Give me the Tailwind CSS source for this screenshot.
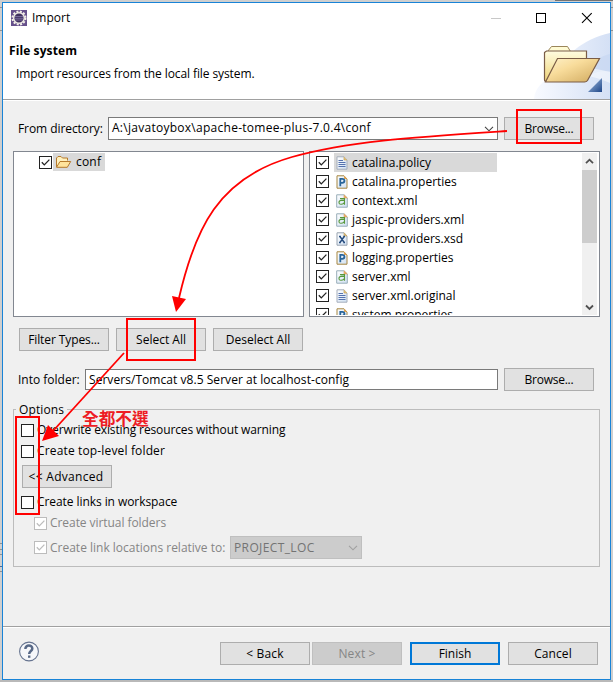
<!DOCTYPE html>
<html lang="en">
<head>
<meta charset="utf-8">
<title>Import</title>
<script src="https://cdn.jsdelivr.net/npm/@tailwindcss/browser@4"></script>
</head>
<body class="w-[613px] h-[682px] overflow-hidden bg-[#cfcfcf] font-['Open_Sans','Noto_Sans_CJK_TC',sans-serif] text-[12px] leading-[18px] text-black">
<svg class="absolute size-0">
  <symbol id="check" viewBox="0 0 13 13"><rect x=".5" y=".5" width="12" height="12" fill="#fff" stroke="currentColor"/><path d="M2.8 6.3L5.3 8.9L10.4 3.6" fill="none" stroke="currentColor" stroke-width="1.3"/></symbol>
  <symbol id="box" viewBox="0 0 13 13"><rect x=".5" y=".5" width="12" height="12" fill="#fff" stroke="#222"/></symbol>
  <linearGradient id="pg" x1="0" y1="0" x2="1" y2="1"><stop offset="0" stop-color="#fff"/><stop offset="1" stop-color="#cfe0f3"/></linearGradient>
  <symbol id="text" viewBox="0 0 12 14"><path d="M1 .8H8L11 4V13.2H1Z" fill="url(#pg)" stroke="#a5aebb"/><path d="M8 .8V4H11" fill="#e8c67a" stroke="#c5a560" stroke-width=".7"/><path d="M2.5 4.5H7M2.5 6.5H9.5M2.5 8.5H9.5M2.5 10.5H9.5" stroke="#5572ae"/></symbol>
  <symbol id="prop" viewBox="0 0 12 14"><path d="M1 .8H8L11 4V13.2H1Z" fill="url(#pg)" stroke="#a5853f"/><path d="M8 .8V4H11Z" fill="#e5a653"/><path d="M4.3 11.2V3.8H6.2C9.2 3.8 9.2 7.9 6.2 7.9H4.3" fill="none" stroke="#28659a" stroke-width="1.8"/></symbol>
  <symbol id="xml" viewBox="0 0 12 14"><path d="M.7 .8H8L11.3 4V13.2H.7Z" fill="url(#pg)" stroke="#98adb8"/><path d="M8 .8V4H11.3Z" fill="#f0ae65" stroke="#dba160" stroke-width=".6"/><path d="M4 4.6H8.5V10.8M8.5 6.4H5.5Q3 6.4 3 8.4T5.2 10.2Q8 10.2 8.5 8.2" fill="none" stroke="#57983b" stroke-width="1.1"/></symbol>
  <symbol id="xsd" viewBox="0 0 12 14"><path d="M1 .8H8L11 4V13.2H1Z" fill="url(#pg)" stroke="#98a3b0"/><path d="M8 .8V4H11Z" fill="#e4c17b" stroke="#c5a560" stroke-width=".6"/><path d="M4 4.5L8.2 10.5M8.2 4.5L4 10.5M3 4.5H5M7.3 4.5H9M3 10.5H5M7.3 10.5H9" stroke="#234a7d" stroke-width="1.4"/></symbol>
</svg>

<div class="relative w-[613px] h-[682px] overflow-hidden">
  <svg class="absolute inset-0" width="613" height="682"><path d="M0 7.5H2M0 30.5H2M611 7.5H613M611 30.5H613M0 543.5H2M0 549.5H2M0 554.5H2M0 571.5H2" stroke="#919191"/><path d="M555 .5H613" stroke="#747474"/><path d="M0 566.5H2" stroke="#4b6c98"/><path d="M0 681H613" stroke="#b9b9b9" stroke-width="2"/></svg>

  <main class="relative ml-[2px] mt-[2px] flex h-[678px] w-[609px] flex-col border border-[#1883d7] bg-[#f0f0f0]">
    <header class="relative h-[96px] shrink-0 bg-white">
      <div class="flex h-[29px] items-center pl-[8px]">
        <svg width="16" height="16" viewBox="0 0 16 16"><rect width="16" height="16" fill="#66508b"/><circle cx="8" cy="8" r="6.4" fill="none" stroke="#f4f1e9" stroke-width="2.2" stroke-dasharray="2 1.35"/><circle cx="8" cy="8" r="5.3" fill="#40315f" stroke="#ece8e2" stroke-width="1.5"/><path d="M4 6.5H12M3.5 8.3H12.5M4.3 10H11.7" stroke="#8577aa" stroke-width=".8"/></svg>
        <span class="ml-[5px]">Import</span>
        <svg class="ml-auto mr-[17px]" width="103" height="12" viewBox="0 0 103 12"><path d="M1 6.5H11" stroke="#c8c8c8"/><rect x="46.5" y="1.5" width="9" height="9" fill="none" stroke="#000"/><path d="M92 1.2L101.7 10.9M101.7 1.2L92 10.9" stroke="#000" stroke-width="1.1"/></svg>
      </div>
      <h1 class="ml-[6px] mt-[10px] text-[12px] leading-[18px] font-bold tracking-[0.1px]">File system</h1>
      <p class="ml-[13px] mt-[5px] tracking-[-0.1px]">Import resources from the local file system.</p>
      <svg class="absolute top-[29px] right-0" width="76" height="67" viewBox="0 0 76 67">
        <defs><linearGradient id="bg1" x1="0" y1="0" x2="1" y2="0"><stop offset="0" stop-color="#f8faff"/><stop offset="1" stop-color="#d4e0f5"/></linearGradient><linearGradient id="f1" x1="0" y1="0" x2="0" y2="1"><stop offset="0" stop-color="#fffce0"/><stop offset="1" stop-color="#efd377"/></linearGradient><linearGradient id="f2" x1="0" y1="0" x2="1" y2="1"><stop offset="0" stop-color="#fff2cb"/><stop offset=".4" stop-color="#f8dc9b"/><stop offset="1" stop-color="#d0a95e"/></linearGradient><linearGradient id="tri" x1="0" y1="0" x2="1" y2="1"><stop offset="0" stop-color="#a8c3e5"/><stop offset="1" stop-color="#1e4688"/></linearGradient></defs>
        <path d="M76 1C49 7 28 25 20 44C8 49 1 56 0 67H76Z" fill="url(#bg1)"/><path d="M76 22C62 25 51 34 47 49C60 39 67 39 76 39Z" fill="#c5d6f2" opacity=".6"/><path d="M20 44C44 32 63 37 76 40V51C55 41 38 43 20 44Z" fill="#fff" opacity=".5"/>
        <g transform="translate(.5 -.5)"><path d="M13 20L17 15H33L36 20Z" fill="#fffbd4" stroke="#9b865a"/><path d="M10 21L12 19.5H52V48Q51 50 49 50H12Q10 50 10 48Z" fill="url(#f1)" stroke="#7a5c46" stroke-width="1.2"/><path d="M23 27H65L53 49Q52 50.5 50 50.5H11Z" fill="url(#f2)" stroke="#7a5c46" stroke-width="1.2"/></g><path d="M54 60L68 46V60Z" fill="url(#tri)"/>
      </svg>
    </header>
    <div class="h-[2px] shrink-0 border-t border-[#a0a0a0] bg-white"></div>

    <section class="flex flex-col pl-[10px] pr-[10px]">
      <div class="mt-[16px] flex h-[23px] items-center pr-[6px] pl-[5px]">
        <label class="w-[90px] tracking-[-0.07px]">From directory:</label>
        <div class="flex h-[23px] w-[390px] items-center border border-[#7a7a7a] bg-white pl-[3px]"><span class="-mt-px tracking-[0.27px]">A:\javatoybox\apache-tomee-plus-7.0.4\conf</span><svg class="ml-auto mr-[3px]" width="10" height="6" viewBox="0 0 10 6"><path d="M1 .8L5 4.8L9 .8" fill="none" stroke="#444" stroke-width="1.1"/></svg></div>
        <button class="ml-[6px] h-[23px] w-[90px] border border-[#adadad] bg-[#e1e1e1] tracking-[-0.25px]">Browse...</button>
      </div>

      <div class="mt-[11px] flex gap-[5px]">
        <div class="h-[166px] w-[291px] border border-[#828790] bg-white pt-px pl-[25px]">
          <div class="flex h-[18px] items-center"><svg class="mt-px text-[#222]" width="13" height="13"><use href="#check"/></svg>
            <div class="ml-px flex h-[18px] w-[52px] items-center bg-[#d9d9d9] pl-[2px]"><svg width="17" height="14" viewBox="0 0 17 14"><path d="M1.5 12V3L3 1.5H6L7.5 3H12.5V5.5" fill="#fff1bd" stroke="#b67a2c"/><path d="M1.5 12.3L5 6.5H15.7L12.3 12.3Z" fill="#ffe49c" stroke="#b67a2c"/></svg><span class="ml-[4px] tracking-[0.2px]">conf</span></div></div>
        </div>
        <div class="flex h-[166px] w-[291px] overflow-hidden border border-[#828790] bg-white p-px">
          <ul id="files" class="h-[162px] w-[271px] overflow-hidden pl-[5px]"></ul>
          <div class="flex h-[162px] w-[15px] flex-col items-center bg-[#f0f0f0]"><svg class="my-[5px] shrink-0" width="9" height="7" viewBox="0 0 9 7"><path d="M1 5.2L4.5 1.7L8 5.2" fill="none" stroke="#505050" stroke-width="1.8"/></svg><div class="h-[73px] w-full bg-[#cdcdcd]"></div><svg class="mt-auto mb-[4px]" width="9" height="7" viewBox="0 0 9 7"><path d="M1 1.5L4.5 5L8 1.5" fill="none" stroke="#505050" stroke-width="1.8"/></svg></div>
        </div>
      </div>

      <div class="mt-[11px] flex h-[23px] gap-[7px] pl-[6px]">
        <button class="w-[90px] border border-[#adadad] bg-[#e1e1e1] tracking-[-0.1px]">Filter Types...</button>
        <button class="w-[90px] border border-[#adadad] bg-[#e1e1e1]">Select All</button>
        <button class="w-[90px] border border-[#adadad] bg-[#e1e1e1]">Deselect All</button>
      </div>

      <div class="mt-[17px] flex h-[23px] items-center pr-[6px] pl-[5px]">
        <label class="w-[67px]">Into folder:</label>
        <div class="flex h-[21px] w-[413px] items-center border border-[#7a7a7a] bg-white pl-[3px] tracking-[0.05px]">Servers/Tomcat v8.5 Server at localhost-config</div>
        <button class="ml-[6px] h-[23px] w-[90px] border border-[#adadad] bg-[#e1e1e1] tracking-[-0.25px]">Browse...</button>
      </div>

      <fieldset class="relative mt-[18px] flex h-[158px] w-[587px] flex-col items-start border border-[#bcbcbc]">
        <div class="-mt-[9px] ml-[2px] h-[18px] bg-[#f0f0f0] px-[3px] tracking-[0.1px]">Options</div>
        <label class="mt-px ml-[7px] flex h-[20px] items-center gap-[3px] tracking-[-0.12px]"><svg width="13" height="13"><use href="#box"/></svg>Overwrite existing resources without warning</label>
        <label class="mt-px ml-[7px] flex h-[20px] items-center gap-[3px] tracking-[0.15px]"><svg width="13" height="13"><use href="#box"/></svg>Create top-level folder</label>
        <button class="mt-[4px] ml-[8px] h-[23px] w-[90px] border border-[#adadad] bg-[#e1e1e1]"><span class="-ml-[2px] tracking-[0.3px]">&lt;&lt; Advanced</span></button>
        <label class="mt-[4px] ml-[7px] flex h-[20px] items-center gap-[3px] tracking-[-0.07px]"><svg width="13" height="13"><use href="#box"/></svg>Create links in workspace</label>
        <label class="mt-px ml-[20px] flex h-[20px] items-center gap-[3px] tracking-[-0.06px] text-[#858585]"><svg class="text-[#bcbcbc]" width="13" height="13"><use href="#check"/></svg>Create virtual folders</label>
        <div class="mt-[3px] ml-[20px] flex h-[23px] items-center text-[#858585]"><svg class="-mt-px text-[#bcbcbc]" width="13" height="13"><use href="#check"/></svg><span class="ml-[3px] w-[180px] whitespace-nowrap">Create link locations relative to:</span>
          <div class="flex h-[23px] w-[132px] items-center border border-[#bfbfbf] bg-[#cccccc] pl-[3px] tracking-[0.38px] text-[#737373]">PROJECT_LOC<svg class="ml-auto mr-[3px]" width="10" height="6" viewBox="0 0 10 6"><path d="M1 .8L5 4.8L9 .8" fill="none" stroke="#a0a0a0" stroke-width="1.1"/></svg></div></div>
      </fieldset>
    </section>

    <footer class="mt-auto h-[53px] border-t border-[#a0a0a0]">
      <div class="flex h-[52px] items-start border-t border-white pt-[14px] pl-[16px] pr-[12px]">
        <svg class="-mt-px" width="20" height="21" viewBox="0 0 20 21"><circle cx="10" cy="10.5" r="9.4" fill="#f6f7fa" stroke="#65738f" stroke-width="1.1"/><path d="M6.4 8C6.2 3.5 13.4 3.5 13.3 7.6C13.2 10 10.2 10 10.2 13" fill="none" stroke="#586987" stroke-width="2.5"/><rect x="9" y="14.5" width="2.4" height="2.3" fill="#586987"/></svg>
        <button class="ml-auto h-[23px] w-[90px] border border-[#adadad] bg-[#e1e1e1] tracking-[0.15px]">&lt; Back</button>
        <button class="ml-[2px] h-[23px] w-[90px] border border-[#bfbfbf] bg-[#cccccc] tracking-[0.15px] text-[#858585]">Next &gt;</button>
        <button class="ml-[8px] h-[23px] w-[90px] border-2 border-[#0078d7] bg-[#e1e1e1]">Finish</button>
        <button class="ml-[8px] h-[23px] w-[90px] border border-[#adadad] bg-[#e1e1e1] tracking-[0.1px]">Cancel</button>
      </div>
    </footer>
  </main>

  <svg class="absolute inset-0" width="613" height="682" fill="none" stroke="#f00" stroke-width="2">
    <rect x="517" y="110" width="64" height="33"/><rect x="127" y="319" width="68" height="41"/><rect x="16" y="417" width="23" height="97"/>
    <path d="M507 131C416 137 349 141 292 157C218 178 195 229 179 298" stroke-width="1.8"/><path d="M176 312L172 296L186 299Z" fill="#f00" stroke="none"/>
    <path d="M124 353L53 431" stroke-width="1.8"/><path d="M42 441L48 425L59 436Z" fill="#f00" stroke="none"/>
  </svg>
  <div class="absolute top-[408px] left-[82px] font-['Noto_Sans_CJK_TC',sans-serif] text-[16.7px] leading-[20px] font-bold whitespace-nowrap text-[#ed1c24]">全都不選</div>
</div>

<script>
const files = [["text","catalina.policy"],["prop","catalina.properties"],["xml","context.xml"],["xml","jaspic-providers.xml"],["xsd","jaspic-providers.xsd"],["prop","logging.properties"],["xml","server.xml"],["text","server.xml.original"],["prop","system.properties"]];
document.getElementById("files").innerHTML = files.map(([icon, name], i) =>
  `<li class="flex h-[19px] items-center"><svg class="-mt-px text-[#222]" width="13" height="13"><use href="#check"/></svg><div class="ml-[5px] flex h-[19px] w-[163px] items-center pl-[2px] ${i ? "" : "bg-[#d9d9d9]"}"><svg width="12" height="14"><use href="#${icon}"/></svg><span class="ml-[4px]">${name}</span></div></li>`).join("");
</script>
</body>
</html>
